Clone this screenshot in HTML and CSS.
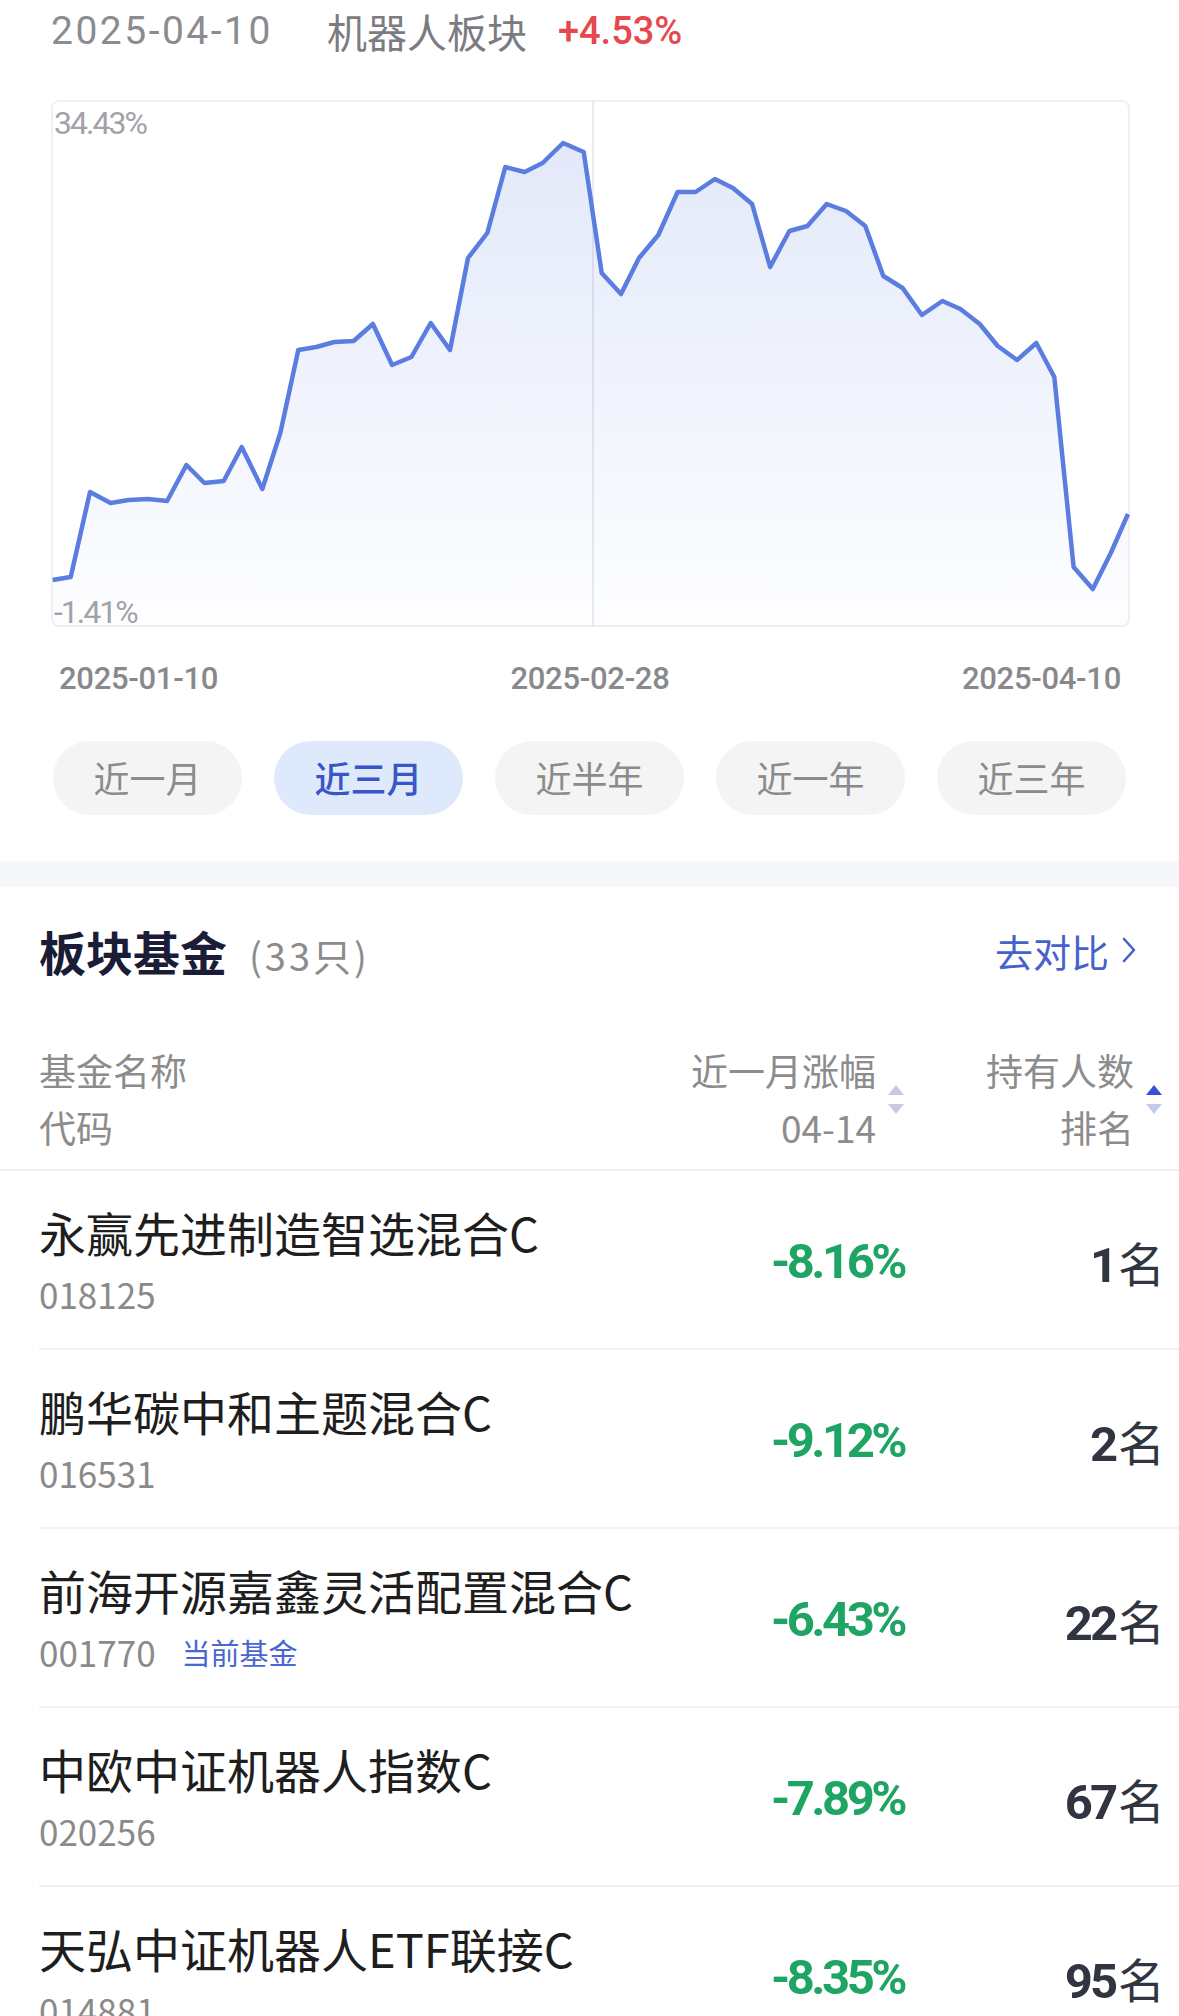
FILE: index.html
```html
<!DOCTYPE html>
<html lang="zh-CN">
<head>
<meta charset="utf-8">
<title>机器人板块</title>
<link rel="stylesheet" href="styles.css">
</head>
<body>
<div class="page">
  <div class="hdr">
    <span class="hdr-date">2025-04-10</span>
    <span class="hdr-name">机器人板块</span>
    <span class="hdr-pct">+4.53%</span>
  </div>

  <div class="chart">
    <svg class="chart-svg" viewBox="49 98 1083 531" width="1083" height="531" preserveAspectRatio="none">
      <defs>
        <linearGradient id="fillGrad" x1="0" y1="0" x2="0" y2="1">
          <stop offset="0" stop-color="#5a7de0" stop-opacity="0.17"/>
          <stop offset="1" stop-color="#5a7de0" stop-opacity="0.01"/>
        </linearGradient>
      </defs>
      <line x1="593" y1="100" x2="593" y2="627" stroke="#e9ebf1" stroke-width="2"/>
      <polygon fill="url(#fillGrad)" points="52.7,627 52.7,580 70.7,577 90,492 110.6,503 128.6,500 147.9,499 167.1,501 186.4,465 204.4,483 223.7,481 241.7,447 262.3,489 280.3,433 298.3,350 316.3,347 334.3,342 353.6,341 372.9,324 392.1,365 411.4,357 430.7,323 450,350 468,258 487.3,233 505.3,167 524.6,172 542.6,163 563.1,143 583.7,152 601.7,273 621,294 639,258 658.3,235 677.6,192 695.6,192 714.9,179 732.9,188 752.1,204 770.1,267 789.4,231 807.4,226 826.7,204 846,211 865.3,226 883.3,276 902.6,288 921.9,315 942.4,301 960.4,309 979.7,324 997.7,346 1017,360 1036.3,343 1054.3,377 1073.6,567 1092.8,589 1110.8,553 1128,514 1128,627"/>
      <polyline fill="none" stroke="#5b7ddf" stroke-width="4.5" stroke-linejoin="round" points="52.7,580 70.7,577 90,492 110.6,503 128.6,500 147.9,499 167.1,501 186.4,465 204.4,483 223.7,481 241.7,447 262.3,489 280.3,433 298.3,350 316.3,347 334.3,342 353.6,341 372.9,324 392.1,365 411.4,357 430.7,323 450,350 468,258 487.3,233 505.3,167 524.6,172 542.6,163 563.1,143 583.7,152 601.7,273 621,294 639,258 658.3,235 677.6,192 695.6,192 714.9,179 732.9,188 752.1,204 770.1,267 789.4,231 807.4,226 826.7,204 846,211 865.3,226 883.3,276 902.6,288 921.9,315 942.4,301 960.4,309 979.7,324 997.7,346 1017,360 1036.3,343 1054.3,377 1073.6,567 1092.8,589 1110.8,553 1128,514"/>
    </svg>
    <span class="chart-max">34.43%</span>
    <span class="chart-min">-1.41%</span>
  </div>

  <div class="axis">
    <span>2025-01-10</span>
    <span>2025-02-28</span>
    <span>2025-04-10</span>
  </div>

  <div class="periods">
    <span class="period">近一月</span>
    <span class="period active">近三月</span>
    <span class="period">近半年</span>
    <span class="period">近一年</span>
    <span class="period">近三年</span>
  </div>

  <div class="band"></div>

  <div class="sec-head">
    <div class="sec-title"><span class="sec-name">板块基金</span><span class="sec-count">(33只)</span></div>
    <div class="sec-link">去对比<svg class="chev" viewBox="0 0 16 30" width="16" height="30"><polyline points="3,4 13,15 3,26" fill="none" stroke="#4461cc" stroke-width="2.6" stroke-linecap="round" stroke-linejoin="round"/></svg></div>
  </div>

  <div class="thead">
    <div class="th-name">
      <div>基金名称</div>
      <div>代码</div>
    </div>
    <div class="th-sort">
      <div class="th-text"><div>近一月涨幅</div><div>04-14</div></div>
      <div class="arrows"><span class="tri up"></span><span class="tri down"></span></div>
    </div>
    <div class="th-sort">
      <div class="th-text"><div>持有人数</div><div>排名</div></div>
      <div class="arrows"><span class="tri up on"></span><span class="tri down"></span></div>
    </div>
  </div>

  <div class="rows">
    <div class="row">
      <div class="fund"><div class="fund-name">永赢先进制造智选混合C</div><div class="fund-code">018125</div></div>
      <div class="val">-8.16%</div>
      <div class="rank"><span class="rank-num">1</span>名</div>
    </div>
    <div class="row">
      <div class="fund"><div class="fund-name">鹏华碳中和主题混合C</div><div class="fund-code">016531</div></div>
      <div class="val">-9.12%</div>
      <div class="rank"><span class="rank-num">2</span>名</div>
    </div>
    <div class="row">
      <div class="fund"><div class="fund-name">前海开源嘉鑫灵活配置混合C</div><div class="fund-code">001770<span class="cur-tag">当前基金</span></div></div>
      <div class="val">-6.43%</div>
      <div class="rank"><span class="rank-num">22</span>名</div>
    </div>
    <div class="row">
      <div class="fund"><div class="fund-name">中欧中证机器人指数C</div><div class="fund-code">020256</div></div>
      <div class="val">-7.89%</div>
      <div class="rank"><span class="rank-num">67</span>名</div>
    </div>
    <div class="row">
      <div class="fund"><div class="fund-name">天弘中证机器人ETF联接C</div><div class="fund-code">014881</div></div>
      <div class="val">-8.35%</div>
      <div class="rank"><span class="rank-num">95</span>名</div>
    </div>
  </div>
</div>
</body>
</html>
```

FILE: styles.css
```css
* {
  box-sizing: border-box;
  margin: 0;
  padding: 0;
}

html, body {
  background: #ffffff;
}

body {
  width: 1179px;
  height: 2016px;
  overflow: hidden;
  font-family: "Noto Sans CJK SC", "Noto Sans", sans-serif;
  color: #1e1e1e;
}

/* ---------- header ---------- */
.hdr {
  height: 62px;
  display: flex;
  align-items: center;
  padding-left: 51px;
  line-height: 1;
}

.hdr-date {
  font-family: Roboto, "Noto Sans CJK SC", sans-serif;
  font-size: 39px;
  color: #8b8b90;
  letter-spacing: 2.5px;
}

.hdr-name {
  margin-left: 54px;
  font-size: 40px;
  color: #7b7c81;
}

.hdr-pct {
  margin-left: 31px;
  font-family: Roboto, sans-serif;
  font-weight: 500;
  font-size: 38px;
  color: #e5484d;
}

/* ---------- chart ---------- */
.chart {
  position: relative;
  margin: 38px 49px 0 51px;
  height: 527px;
  border: 2px solid #eff0f4;
  border-radius: 8px;
}

.chart-svg {
  position: absolute;
  left: -4px;
  top: -4px;
  display: block;
}

.chart-max,
.chart-min {
  position: absolute;
  left: 1px;
  font-family: Roboto, sans-serif;
  font-size: 32px;
  line-height: 1;
  color: #a2a2a8;
  letter-spacing: -2px;
}

.chart-max {
  top: 5px;
}

.chart-min {
  bottom: -3px;
}

/* ---------- axis ---------- */
.axis {
  display: flex;
  justify-content: space-between;
  margin: 35px 58px 0 59px;
  font-family: Roboto, sans-serif;
  font-weight: 500;
  font-size: 31px;
  line-height: 34px;
  color: #88888d;
  letter-spacing: -0.3px;
}

/* ---------- period tabs ---------- */
.periods {
  display: flex;
  gap: 32px;
  margin-top: 45px;
  padding-left: 53px;
}

.period {
  width: 189px;
  height: 74px;
  border-radius: 37px;
  background: #f4f4f5;
  display: flex;
  align-items: center;
  justify-content: center;
  padding-bottom: 3px;
  font-size: 36px;
  color: #8b8b8b;
}

.period.active {
  background: #deeafc;
  color: #3a56c6;
  font-weight: 500;
}

.band {
  margin-top: 46px;
  height: 26px;
  background: #f5f7fa;
}

/* ---------- section head ---------- */
.sec-head {
  height: 134px;
  display: flex;
  align-items: center;
  justify-content: space-between;
  padding: 0 42px 8px 39px;
}

.sec-title {
  display: flex;
  align-items: baseline;
}

.sec-name {
  font-size: 47px;
  font-weight: 700;
  color: #1b1d36;
}

.sec-count {
  margin-left: 22px;
  font-size: 38px;
  letter-spacing: 3px;
  color: #8c8c8c;
}

.sec-link {
  display: flex;
  align-items: center;
  font-size: 38px;
  color: #4461cc;
}

.chev {
  margin-left: 12px;
  display: block;
}

/* ---------- table head ---------- */
.thead {
  display: grid;
  grid-template-columns: minmax(0, 1fr) 300px 258px;
  padding: 21px 17px 13px 39px;
  border-bottom: 2px solid #efefef;
  font-size: 37px;
  line-height: 57px;
  color: #8c8c8c;
}

.th-sort {
  display: flex;
  justify-content: flex-end;
  align-items: center;
}

.th-text {
  text-align: right;
}

.arrows {
  display: flex;
  flex-direction: column;
  gap: 9px;
  margin-left: 12px;
  width: 16px;
  align-items: center;
}

.tri {
  display: block;
  width: 0;
  height: 0;
  border-left: 8px solid transparent;
  border-right: 8px solid transparent;
}

.tri.up {
  border-bottom: 10px solid #c5cae9;
}

.tri.down {
  border-top: 10px solid #c5cae9;
}

.tri.up.on {
  border-bottom-color: #3552d6;
}

/* ---------- rows ---------- */
.rows {
  margin-left: 39px;
}

.row {
  height: 179px;
  display: grid;
  grid-template-columns: minmax(0, 1fr) 300px 258px;
  padding-right: 14px;
  border-bottom: 2px solid #f1f1f2;
  align-items: center;
}

.fund {
  align-self: start;
  padding-top: 32px;
  white-space: nowrap;
}

.fund-name {
  font-size: 47px;
  line-height: 58px;
  color: #1e1e1e;
}

.fund-code {
  margin-top: 8px;
  font-size: 35px;
  line-height: 50px;
  color: #8a8a8a;
  display: flex;
  align-items: center;
}

.cur-tag {
  margin-left: 26px;
  font-size: 29px;
  color: #4a67cf;
}

.val {
  text-align: right;
  margin-top: 4px;
  margin-right: 3px;
  font-family: Roboto, sans-serif;
  font-weight: 700;
  font-size: 49px;
  letter-spacing: -3.5px;
  color: #1ea463;
}

.rank {
  text-align: right;
  margin-top: 4px;
  font-size: 47px;
  color: #303541;
}

.rank-num {
  font-family: Roboto, sans-serif;
  font-weight: 700;
  font-size: 49px;
  letter-spacing: -3px;
  margin-right: 3px;
}
```
